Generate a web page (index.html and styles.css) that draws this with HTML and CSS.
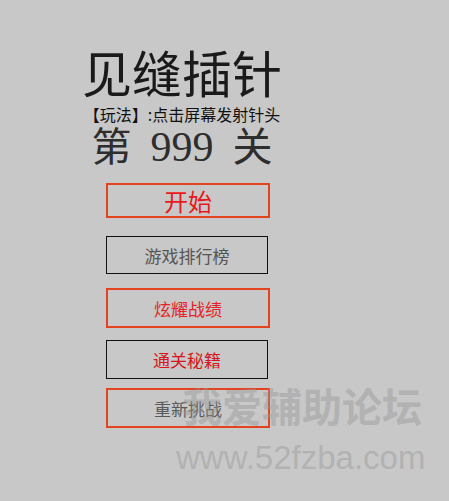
FILE: index.html
```html
<!DOCTYPE html>
<html lang="zh">
<head>
<meta charset="utf-8">
<title>见缝插针</title>
<link rel="stylesheet" href="styles.css">
</head>
<body>
<main class="page">
  <header class="head">
    <h1 class="title">见缝插针</h1>
    <p class="rule">【玩法】:点击屏幕发射针头</p>
    <p class="level">第 <span class="num">999</span> 关</p>
  </header>
  <nav class="menu">
    <button class="btn btn-red btn-start">开始</button>
    <button class="btn btn-black btn-rank">游戏排行榜</button>
    <button class="btn btn-red btn-show">炫耀战绩</button>
    <button class="btn btn-black btn-cheat">通关秘籍</button>
    <button class="btn btn-red btn-retry">重新挑战</button>
  </nav>
</main>
<div class="watermark">
  <div class="wm-cn">我爱辅助论坛</div>
  <div class="wm-url">www.52fzba.com</div>
</div>
</body>
</html>
```
FILE: styles.css
```css
html, body {
  margin: 0;
  padding: 0;
}
body {
  background: #c8c8c8;
  width: 449px;
  height: 501px;
  overflow: hidden;
  position: relative;
  font-family: "Noto Sans CJK SC", "Liberation Sans", sans-serif;
}
.page {
  display: flex;
  flex-direction: column;
  padding-top: 43px;
}
.head {
  width: 200px;
  margin-left: 82px;
  text-align: center;
  color: #1a1a1a;
}
.title {
  margin: 0;
  font-size: 50px;
  font-weight: normal;
  line-height: 56px;
  height: 61px;
}
.rule {
  margin: 0;
  font-size: 16px;
  line-height: 20px;
  height: 20px;
  color: #111;
  white-space: nowrap;
}
.level {
  margin: 0;
  font-size: 40px;
  line-height: 40px;
  height: 44px;
  color: #2e2e2e;
  white-space: pre;
  word-spacing: 10px;
}
.num {
  font-family: "Liberation Serif", serif;
  font-size: 42px;
  line-height: 1;
}
.menu {
  display: flex;
  flex-direction: column;
  align-items: flex-start;
  margin-left: 106px;
  margin-top: 15px;
}
.btn {
  box-sizing: border-box;
  background: transparent;
  padding: 0;
  font-family: "Noto Sans CJK SC", sans-serif;
  font-size: 17px;
  color: #555;
  cursor: pointer;
}
.btn-red {
  width: 164px;
  border: 2px solid #e4431f;
}
.btn-black {
  width: 162px;
  border: 1px solid #111;
}
.btn-start {
  height: 35px;
  font-size: 24px;
  color: #e8191b;
  line-height: 30px;
}
.btn-rank {
  height: 38px;
  margin-top: 18px;
}
.btn-show {
  height: 40px;
  margin-top: 14px;
  color: #e62224;
}
.btn-cheat {
  height: 39px;
  margin-top: 12px;
  color: #d5161a;
}
.btn-retry {
  height: 40px;
  margin-top: 9px;
  color: #5a5a5a;
}
.watermark {
  position: absolute;
  left: 176px;
  top: 379px;
  pointer-events: none;
  color: rgba(150, 150, 150, 0.45);
}
.wm-cn {
  font-family: "Noto Sans CJK SC", sans-serif;
  font-weight: bold;
  font-size: 40px;
  line-height: 52px;
  padding-left: 6px;
}
.wm-url {
  font-family: "Liberation Sans", sans-serif;
  font-size: 33px;
  line-height: 40px;
  margin-top: 7px;
}
```
